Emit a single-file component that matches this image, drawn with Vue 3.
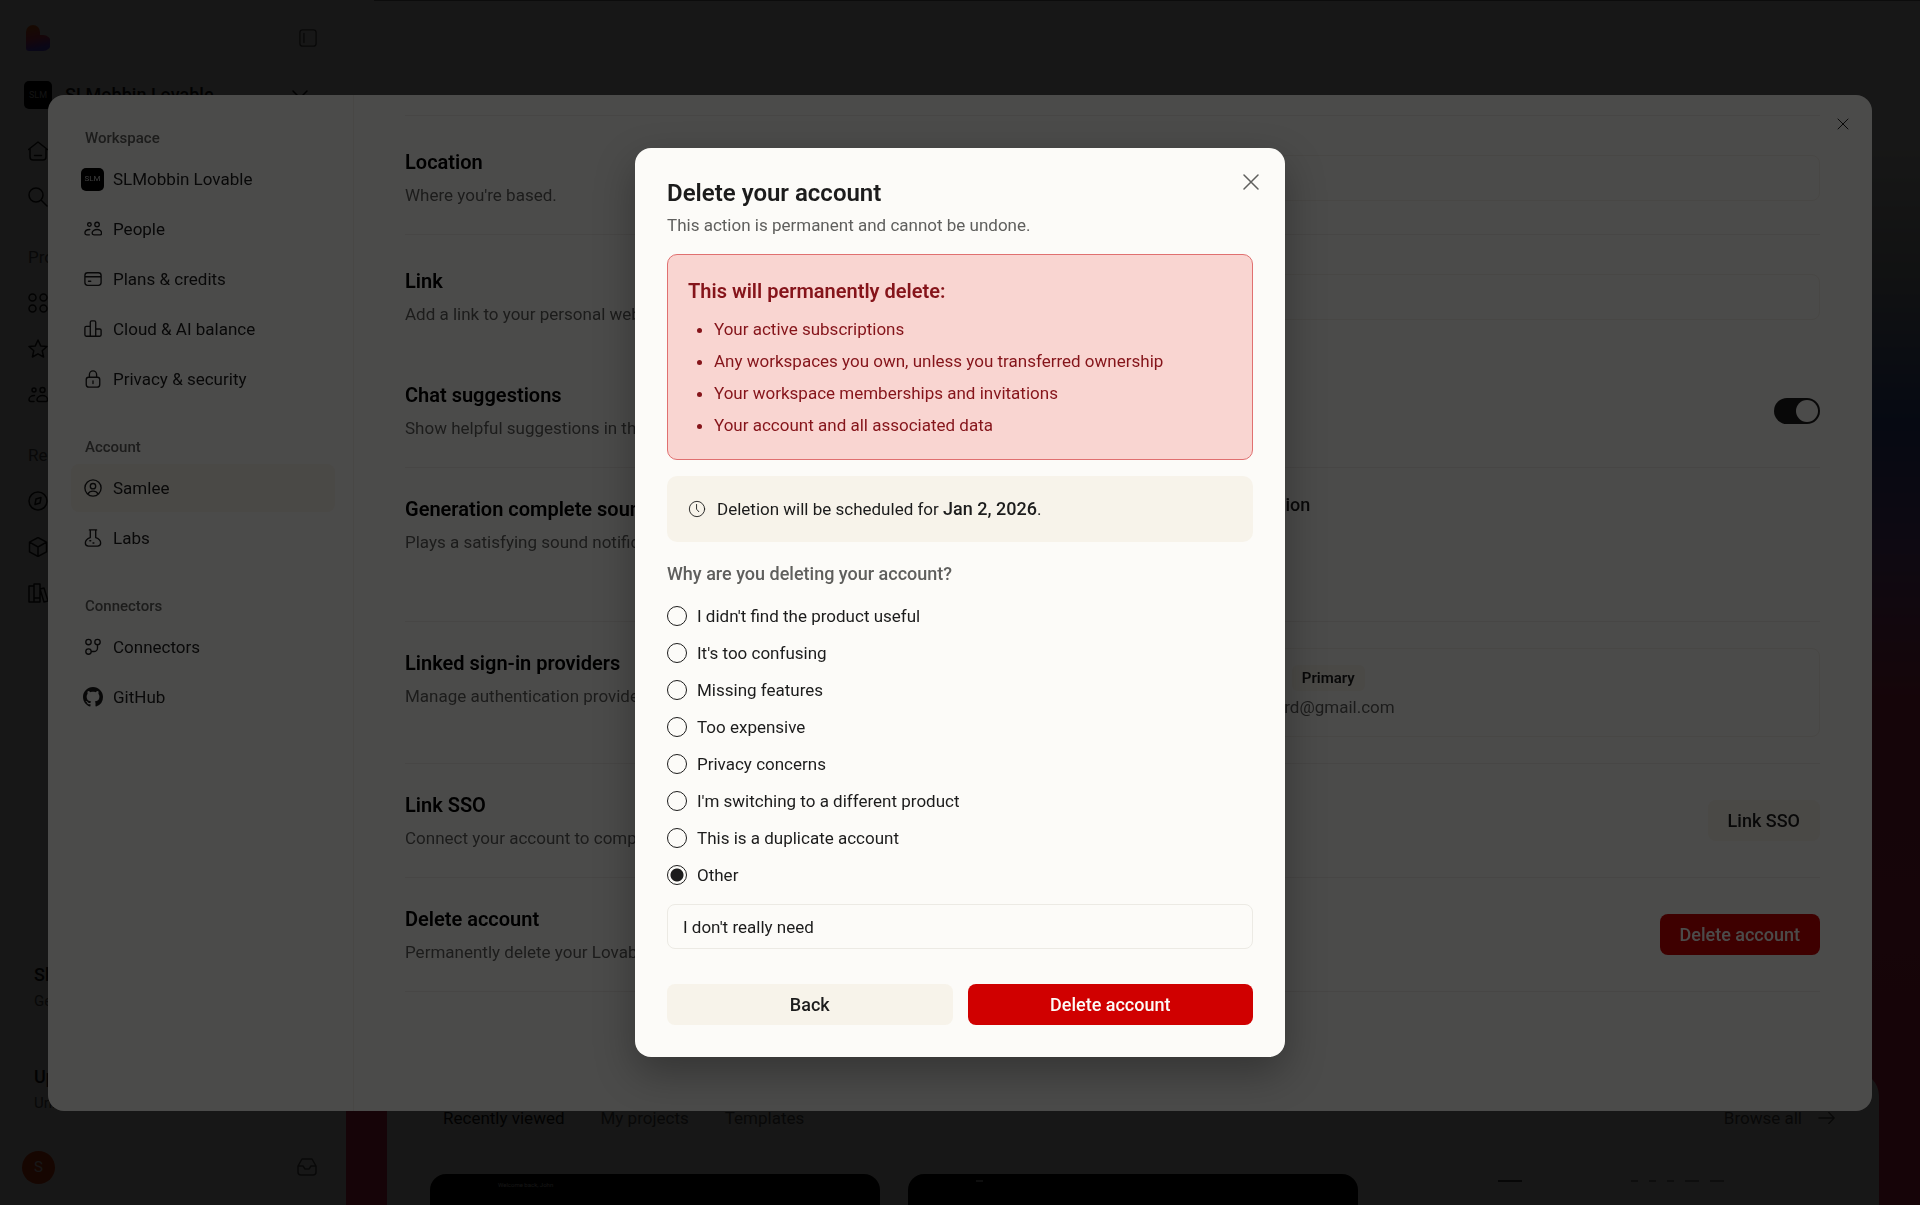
<template>
  <div class="app">

    <!-- Dashboard sidebar -->
    <aside class="side">
      <div class="side-top">
        <svg class="logo" viewBox="0 0 24 26">
          <defs>
            <linearGradient id="heart" x1="0.3" y1="0" x2="0.5" y2="1">
              <stop offset="0.1" stop-color="#ff6a1c" />
              <stop offset="0.5" stop-color="#f2406a" />
              <stop offset="0.9" stop-color="#6a4cff" />
            </linearGradient>
          </defs>
          <path fill="url(#heart)" d="M0 7a7 7 0 0 1 14 0v3h3a7.500 7.500 0 0 1 0 16H3a3 3 0 0 1-3-3z" />
        </svg>
        <button class="icon-btn" aria-label="Toggle sidebar">
          <svg class="ic18" viewBox="0 0 20 20"><rect x="1" y="1" width="18" height="18" rx="3" /><path d="M5.500 5v10" /></svg>
        </button>
      </div>
      <button class="switcher">
        <span class="tile big">SLM</span>
        <span class="switcher-name">SLMobbin Lovable</span>
        <svg class="ic16" viewBox="0 0 16 16"><path d="M1 4l7 7 7-7" /></svg>
      </button>
      <nav class="rail">
        <a v-for="i in railTop" :key="i" href="#" :aria-label="i"><svg class="ic20" viewBox="0 0 20 20"><path :d="icons[i]" /></svg></a>
        <h6>Projects</h6>
        <a v-for="i in railProjects" :key="i" href="#" :aria-label="i"><svg class="ic20" viewBox="0 0 20 20"><path :d="icons[i]" /></svg></a>
        <h6>Recent</h6>
        <a v-for="i in railRecent" :key="i" href="#" :aria-label="i"><svg class="ic20" viewBox="0 0 20 20"><path :d="icons[i]" /></svg></a>
      </nav>
      <div class="promos">
        <div class="promo"><b>Share Lovable</b><span>Get credits</span></div>
        <div class="promo"><b>Upgrade</b><span>Unlock more</span></div>
      </div>
      <div class="side-foot">
        <span class="avatar">S</span>
        <button class="icon-btn" aria-label="Inbox">
          <svg class="ic20" viewBox="0 0 20 20"><path :d="icons.inbox" /></svg>
        </button>
      </div>
    </aside>

    <main class="stage">
      <section class="projects">
        <div class="tabs">
          <a href="#" class="on">Recently viewed</a>
          <a href="#">My projects</a>
          <a href="#">Templates</a>
          <a href="#" class="all">Browse all
            <svg class="ic18" viewBox="0 0 20 20"><path d="M1 10h17M12 4l6 6-6 6" /></svg>
          </a>
        </div>
        <div class="thumbs">
          <div class="thumb"><small>Welcome back, John</small></div>
          <div class="thumb"><i></i></div>
          <div class="thumb light"><i class="brand"></i><i></i><i></i><i></i><i class="wide"></i><i class="wide"></i></div>
        </div>
      </section>
    </main>

    <!-- Settings -->
    <div class="overlay settings-wrap">
      <div class="settings">
        <nav class="menu">
          <div v-for="g in menu" :key="g.label" class="group">
            <h5>{{ g.label }}</h5>
            <a v-for="m in g.items" :key="m.text" href="#" :class="{ active: m.active }">
              <span class="slot">
                <span v-if="m.icon === 'tile'" class="tile">SLM</span>
                <svg v-else-if="m.icon === 'github'" class="gh" viewBox="0 0 16 16"><path :d="icons.github" /></svg>
                <svg v-else class="ic18" viewBox="0 0 20 20"><path :d="icons[m.icon]" /></svg>
              </span>
              {{ m.text }}
            </a>
          </div>
        </nav>

        <div class="panel">
          <button class="close-settings" aria-label="Close settings">
            <svg class="ic12" viewBox="0 0 12 12"><path d="M1 1l10 10M11 1L1 11" /></svg>
          </button>

          <div class="row field">
            <div class="about"><h3><label for="location">Location</label></h3><p>Where you're based.</p></div>
            <input id="location" type="text">
          </div>
          <div class="row field plain">
            <div class="about"><h3><label for="link">Link</label></h3><p>Add a link to your personal website.</p></div>
            <input id="link" type="text">
          </div>
          <div class="row">
            <div class="about"><h3><label for="chat">Chat suggestions</label></h3><p>Show helpful suggestions in the chat.</p></div>
            <input id="chat" v-model="suggestions" class="switch" type="checkbox" role="switch">
          </div>
          <div class="row top">
            <div class="about"><h3>Generation complete sound</h3><p>Plays a satisfying sound notification.</p></div>
            <div class="sounds">
              <label v-for="s in sounds" :key="s"><input v-model="sound" type="radio" name="sound" :value="s">{{ s }}</label>
            </div>
          </div>
          <div class="row top">
            <div class="about"><h3>Linked sign-in providers</h3><p>Manage authentication providers.</p></div>
            <div class="provider">
              <div><b>Google</b><span class="badge">Primary</span></div>
              <p>samleeboard@gmail.com</p>
            </div>
          </div>
          <div class="row">
            <div class="about"><h3>Link SSO</h3><p>Connect your account to company SSO.</p></div>
            <button class="btn soft">Link SSO</button>
          </div>
          <div class="row">
            <div class="about"><h3>Delete account</h3><p>Permanently delete your Lovable account.</p></div>
            <button class="btn danger">Delete account</button>
          </div>
        </div>
      </div>
    </div>

    <!-- Delete account dialog -->
    <div class="overlay">
      <form class="dialog" role="dialog" aria-labelledby="dlg-title" @submit.prevent>
        <button type="button" class="close-dialog" aria-label="Close">
          <svg class="ic16" viewBox="0 0 16 16"><path d="M1 1l14 14M15 1L1 15" /></svg>
        </button>
        <h2 id="dlg-title">Delete your account</h2>
        <p class="sub">This action is permanent and cannot be undone.</p>

        <div class="warning">
          <h3>This will permanently delete:</h3>
          <ul>
            <li v-for="l in losses" :key="l">{{ l }}</li>
          </ul>
        </div>

        <div class="notice">
          <svg class="ic18" viewBox="0 0 20 20"><circle cx="10" cy="10" r="8.500" /><path d="M9.500 5v5.200l2.500 2.800" /></svg>
          <span>Deletion will be scheduled for <b>Jan 2, 2026</b>.</span>
        </div>

        <fieldset>
          <legend>Why are you deleting your account?</legend>
          <label v-for="r in reasons" :key="r" class="reason">
            <input v-model="reason" type="radio" name="reason" :value="r">{{ r }}
          </label>
        </fieldset>
        <input v-model="details" class="details" type="text" aria-label="Tell us more">

        <div class="actions">
          <button type="button" class="btn soft">Back</button>
          <button type="submit" class="btn danger">Delete account</button>
        </div>
      </form>
    </div>

  </div>
</template>

<script setup>
import { ref } from 'vue'

const suggestions = ref(true)
const sound = ref('First generation')
const reason = ref('Other')
const details = ref("I don't really need")

const sounds = ['First generation', 'Always', 'Never']

const losses = [
  'Your active subscriptions',
  'Any workspaces you own, unless you transferred ownership',
  'Your workspace memberships and invitations',
  'Your account and all associated data',
]

const reasons = [
  "I didn't find the product useful",
  "It's too confusing",
  'Missing features',
  'Too expensive',
  'Privacy concerns',
  "I'm switching to a different product",
  'This is a duplicate account',
  'Other',
]

const menu = [
  {
    label: 'Workspace',
    items: [
      { text: 'SLMobbin Lovable', icon: 'tile' },
      { text: 'People', icon: 'people' },
      { text: 'Plans & credits', icon: 'card' },
      { text: 'Cloud & AI balance', icon: 'bars' },
      { text: 'Privacy & security', icon: 'lock' },
    ],
  },
  {
    label: 'Account',
    items: [
      { text: 'Samlee', icon: 'user', active: true },
      { text: 'Labs', icon: 'flask' },
    ],
  },
  {
    label: 'Connectors',
    items: [
      { text: 'Connectors', icon: 'nodes' },
      { text: 'GitHub', icon: 'github' },
    ],
  },
]

const railTop = ['home', 'search']
const railProjects = ['grid', 'star', 'people']
const railRecent = ['compass', 'cube', 'books']

const icons = {
  home: 'M0.500 8.500L10 1l9.500 7.500M2 7.500V16a3 3 0 0 0 3 3h10a3 3 0 0 0 3-3V7.500M6.500 14.500h7',
  search: 'M8 1a7 7 0 1 0 0 14A7 7 0 1 0 8 1M13 13l6 6',
  grid: 'M4.500 1a3.500 3.500 0 1 0 0 7 3.500 3.500 0 1 0 0-7M15.500 1a3.500 3.500 0 1 0 0 7 3.500 3.500 0 1 0 0-7M4.500 12a3.500 3.500 0 1 0 0 7 3.500 3.500 0 1 0 0-7M15.500 12a3.500 3.500 0 1 0 0 7 3.500 3.500 0 1 0 0-7',
  star: 'M10 1l2.700 5.900 6.300.6-4.800 4.200 1.400 6.300L10 14.800 4.400 18l1.400-6.300L1 7.500l6.300-.6z',
  people: 'M6 3a2 2 0 1 0 0 4 2 2 0 1 0 0-4M14.500 2.500a2.500 2.500 0 1 0 0 5 2.500 2.500 0 1 0 0-5M6.500 10.500C3 10.500 1 12.500 1 14.500 1 16 2 16.500 3 16.500h3M14.500 10.500c-3 0-5.500 2-5.500 4 0 1.500 1 2 2 2h7c1 0 1.500-.7 1.500-2 0-2-2-4-5-4',
  card: 'M4 3h12a3 3 0 0 1 3 3v8a3 3 0 0 1-3 3H4a3 3 0 0 1-3-3V6a3 3 0 0 1 3-3M1 7.500h18M5 12.500h2.500',
  bars: 'M7 18V2.500A1.500 1.500 0 0 1 8.500 1h3A1.500 1.500 0 0 1 13 2.500V18M7 7H2.500A1.500 1.500 0 0 0 1 8.500v8A1.500 1.500 0 0 0 2.500 18h15a1.500 1.500 0 0 0 1.500-1.500v-5a1.500 1.500 0 0 0-1.500-1.500H13',
  lock: 'M5 8h10a2.500 2.500 0 0 1 2.500 2.500V16a3 3 0 0 1-3 3h-9a3 3 0 0 1-3-3v-5.500A2.500 2.500 0 0 1 5 8M6 8V5a4 4 0 0 1 8 0v3M10 12v3',
  user: 'M10 1a9 9 0 1 0 0 18 9 9 0 1 0 0-18M10 5a3 3 0 1 0 0 6 3 3 0 1 0 0-6M4.500 16.500c1-2 3-3 5.500-3s4.500 1 5.500 3',
  flask: 'M6 1h8M7 1v8.500C4 10.500 1.500 13 1.500 15.500S3.500 19 5 19h10c1.500 0 3.500-1 3.500-3.500S16 10.500 13 9.500V1M6.500 13h1M10 15.500h1',
  nodes: 'M5 1.500a3 3 0 1 0 0 6 3 3 0 1 0 0-6M15 1.500a3 3 0 1 0 0 6 3 3 0 1 0 0-6M5 12a3 3 0 1 0 0 6 3 3 0 1 0 0-6M15 7.500V11a4 4 0 0 1-4 4H8',
  compass: 'M10 1a9 9 0 1 0 0 18 9 9 0 1 0 0-18M8 8l5-1.500-1 5.500-5 1.500z',
  cube: 'M10 0.500l8.500 4.700v9.600L10 19.500l-8.500-4.700V5.200zM1.500 5.200L10 10l8.500-4.800M10 10v9.500',
  books: 'M1 3h5v16H1zM6 1h6v18H6zM6 15h6M12 6l4-1 4 13-4 1-4-13',
  inbox: 'M5 2h10l4 7v6a3 3 0 0 1-3 3H4a3 3 0 0 1-3-3V9zM1 9h5l2 3h4l2-3h5',
  github: 'M8 0C3.580 0 0 3.580 0 8c0 3.540 2.290 6.530 5.470 7.590.4.070.55-.17.55-.38 0-.19-.01-.82-.01-1.490-2.010.37-2.530-.49-2.690-.94-.09-.23-.48-.94-.82-1.130-.28-.15-.68-.52-.01-.53.63-.01 1.080.58 1.230.82.72 1.210 1.870.87 2.330.66.07-.52.28-.87.51-1.070-1.780-.2-3.640-.89-3.640-3.950 0-.87.31-1.590.82-2.150-.08-.2-.36-1.020.08-2.120 0 0 .67-.21 2.200.82.64-.18 1.320-.27 2-.27s1.360.09 2 .27c1.530-1.040 2.200-.82 2.200-.82.44 1.100.16 1.920.08 2.120.51.56.82 1.270.82 2.150 0 3.070-1.870 3.750-3.650 3.950.29.25.54.73.54 1.480 0 1.070-.01 1.930-.01 2.200 0 .21.15.46.55.38A8.010 8.010 0 0 0 16 8c0-4.420-3.580-8-8-8',
}
</script>

<style>
body {
  margin: 0;
  background: #fcfbf8;
}
</style>

<style scoped>
* { box-sizing: border-box; }

.app {
  display: flex;
  height: 100vh;
  overflow: hidden;
  background: #fcfbf8;
  color: #1c1c1c;
  font-family: Roboto, "Liberation Sans", sans-serif;
  font-size: 17px;
  line-height: 26px;
}

h2, h3, h5, h6, p, ul, fieldset { margin: 0; padding: 0; }
a { color: inherit; text-decoration: none; }
b { font-size: 18px; font-weight: 500; }

button, input {
  margin: 0;
  font: inherit;
  color: inherit;
}

button {
  padding: 0;
  border: 0;
  background: none;
}

svg {
  display: block;
  flex: none;
  fill: none;
  stroke: currentColor;
  stroke-width: 1.5;
  stroke-linecap: round;
  stroke-linejoin: round;
}

.ic12 { width: 12px; height: 12px; stroke-width: 1; }
.ic16 { width: 16px; height: 16px; }
.ic18 { width: 18px; height: 18px; }
.ic20 { width: 20px; height: 20px; }
.gh { width: 20px; height: 20px; fill: currentColor; stroke: none; }
.logo { width: 24px; height: 26px; stroke: none; }

/* ── Dashboard ── */
.side {
  display: flex;
  flex-direction: column;
  width: 346px;
  padding: 24px 28px 20px 24px;
}

.side-top,
.side-foot {
  display: flex;
  align-items: center;
  justify-content: space-between;
}

.side-top { height: 28px; padding-left: 2px; }
.side-top .icon-btn, .side-foot .icon-btn { margin-right: 1px; color: #5f5f5d; }

.switcher {
  display: flex;
  align-items: center;
  gap: 13px;
  margin: 29px 0 19px;
  padding-right: 10px;
  text-align: left;
}

.switcher-name { flex: 1; font-weight: 500; font-size: 18px; }

.tile {
  display: flex;
  align-items: center;
  justify-content: center;
  width: 23px;
  height: 23px;
  border-radius: 5px;
  background: #000;
  color: #c8c8c8;
  font-size: 8px;
  line-height: 8px;
}

.tile.big { width: 28px; height: 28px; font-size: 9px; }

.rail { padding-left: 4px; }
.rail a { display: flex; align-items: center; height: 46px; }
.rail h6 { margin: 24px 0 10px; line-height: 26px; font-size: 17px; font-weight: 400; color: #5f5f5d; }

.promos { margin-top: auto; padding: 0 10px; display: grid; gap: 50px; }
.promo { display: flex; flex-direction: column; }
.promo span { font-size: 15px; color: #5f5f5d; }

.side-foot { height: 36px; margin-top: 33px; }

.avatar {
  display: flex;
  align-items: center;
  justify-content: center;
  width: 33px;
  height: 33px;
  margin-left: -2px;
  border-radius: 50%;
  background: #f0400f;
  color: #fff;
  font-size: 15px;
}

.stage {
  flex: 1;
  display: flex;
  align-items: flex-end;
  padding: 0 41px;
  background:
    linear-gradient(#8a8a86, #8a8a86) right top / calc(100% - 28px) 1px no-repeat,
    linear-gradient(#fcfbf8 12%, #b8c0c4 23%, #4468c8 35%, #a068c0 46%, #e83c68 58%, #f03058 100%);
}

.projects {
  width: 100%;
  height: 133px;
  padding: 33px 43px 0;
  border-radius: 24px 24px 0 0;
  background: #fcfbf8;
}

.tabs { display: flex; gap: 36px; padding-left: 13px; color: #5f5f5d; }
.tabs .on { color: #1c1c1c; }
.tabs .all { display: flex; align-items: center; gap: 16px; margin-left: auto; }

.thumbs {
  display: grid;
  grid-template-columns: repeat(3, 1fr);
  gap: 28px;
  margin-top: 43px;
}

.thumb {
  display: flex;
  gap: 11px;
  height: 200px;
  padding: 6px 68px;
  border-radius: 16px;
  background: #050505;
  color: #ddd;
}

.thumb small { font-size: 6px; line-height: 10px; }
.thumb i { width: 7px; height: 2px; background: #999; }
.thumb.light { padding: 6px 112px; background: #fcfbf8; }
.thumb .brand { width: 24px; margin-right: auto; background: #555; }
.thumb .wide { width: 14px; }

/* ── Overlays ── */
.overlay {
  position: fixed;
  inset: 0;
  display: flex;
  align-items: center;
  justify-content: center;
  background: rgba(0, 0, 0, 0.7);
}

.settings-wrap { padding: 95px 48px 94px; align-items: stretch; }

.settings {
  position: relative;
  flex: 1;
  display: flex;
  overflow: hidden;
  border-radius: 16px;
  background: #fcfbf8;
}

.menu {
  display: flex;
  flex-direction: column;
  gap: 31px;
  width: 306px;
  padding: 31px 18px 0 23px;
  border-right: 1px solid #f0eee6;
}

.group { display: grid; gap: 2px; }

.group h5 {
  margin: 0 0 3px;
  padding-left: 14px;
  font-size: 15px;
  font-weight: 500;
  line-height: 24px;
  color: #5f5f5d;
}

.group a {
  display: flex;
  align-items: center;
  gap: 9px;
  height: 48px;
  padding-left: 10px;
  border-radius: 8px;
}

.group + .group { margin-top: 1px; }
.group a.active { background: #f7f3ea; }
.slot { display: flex; justify-content: center; width: 23px; }

.panel { flex: 1; padding: 20px 52px 0 51px; }

.close-settings {
  position: absolute;
  top: 23px;
  right: 23px;
}

.row {
  display: flex;
  align-items: center;
  justify-content: space-between;
  padding: 26px 0;
  border-bottom: 1px solid #eeece6;
}

.row.top { align-items: flex-start; }
.row.field { padding: 31px 0 26px; }
.row.plain { border-color: transparent; }
.row:nth-of-type(1) { border-top: 1px solid #eeece6; }

.about h3 { margin-bottom: 5px; font-size: 20px; font-weight: 600; line-height: 30px; color: #000; }
.about p { color: #5f5f5d; }

.field input {
  width: 49%;
  height: 46px;
  border: 1px solid #f0eee6;
  border-radius: 8px;
  background: transparent;
}

.switch {
  appearance: none;
  display: flex;
  width: 46px;
  height: 26px;
  padding: 2px;
  border-radius: 13px;
  background: #1c1c1c;
}

.switch::before {
  content: "";
  width: 22px;
  height: 22px;
  margin-left: auto;
  border-radius: 50%;
  background: #fcfbf8;
}

.sounds { display: grid; gap: 19px; width: 49%; padding-left: 27px; }
.sounds label { display: flex; align-items: center; gap: 10px; height: 21px; font-size: 18px; font-weight: 500; }

.provider {
  width: 49%;
  height: 89px;
  padding: 16px 73px;
  border: 1px solid #f0eee6;
  border-radius: 8px;
}

.provider div { display: flex; align-items: center; gap: 34px; }
.provider p { margin-top: 3px; color: #5f5f5d; }
.badge { padding: 0 10px; border-radius: 6px; background: #f7f3ea; font-size: 15px; font-weight: 600; }

.btn {
  height: 41px;
  padding: 0 20px;
  border-radius: 8px;
  font-size: 18px;
  font-weight: 500;
}

.btn.soft { background: #f7f3ea; }
.btn.danger { background: #d00000; color: #fcfbf8; }

/* ── Dialog ── */
.dialog {
  position: relative;
  width: 650px;
  padding: 29px 32px 32px;
  border-radius: 16px;
  background: #fcfbf8;
  box-shadow: 0 16px 40px rgba(0, 0, 0, 0.3);
}

.close-dialog {
  position: absolute;
  top: 26px;
  right: 26px;
  color: #5f5f5d;
}

h2 { font-size: 24px; font-weight: 600; line-height: 32px; }
.sub { margin-top: 3px; color: #5f5f5d; }

.warning {
  margin-top: 16px;
  padding: 21px 20px 18px;
  border: 1px solid #e07070;
  border-radius: 10px;
  background: #f9d5d1;
  color: #85141a;
}

.warning h3 { font-size: 20px; font-weight: 600; line-height: 30px; }
.warning ul { margin-top: 7px; padding-left: 26px; line-height: 32px; }

.notice {
  display: flex;
  align-items: center;
  gap: 11px;
  height: 66px;
  margin-top: 16px;
  padding: 0 21px;
  border-radius: 10px;
  background: #f7f3ea;
}

.notice svg { stroke-width: 1; }

fieldset { margin-top: 19px; border: 0; }
legend { padding: 0 0 10px; font-size: 18px; font-weight: 500; color: #5f5f5d; }

.reason { display: flex; align-items: center; gap: 10px; height: 37px; }

input[type="radio"] {
  appearance: none;
  width: 20px;
  height: 20px;
  border: 1px solid #1c1c1c;
  border-radius: 50%;
}

input[type="radio"]:checked { background: radial-gradient(#1c1c1c 6px, transparent 7px); }

.details {
  display: block;
  width: 100%;
  height: 45px;
  margin-top: 11px;
  padding: 0 15px;
  border: 1px solid #eceae4;
  border-radius: 8px;
  background: transparent;
}

.actions {
  display: grid;
  grid-template-columns: 1fr 1fr;
  gap: 15px;
  margin-top: 35px;
}
</style>
